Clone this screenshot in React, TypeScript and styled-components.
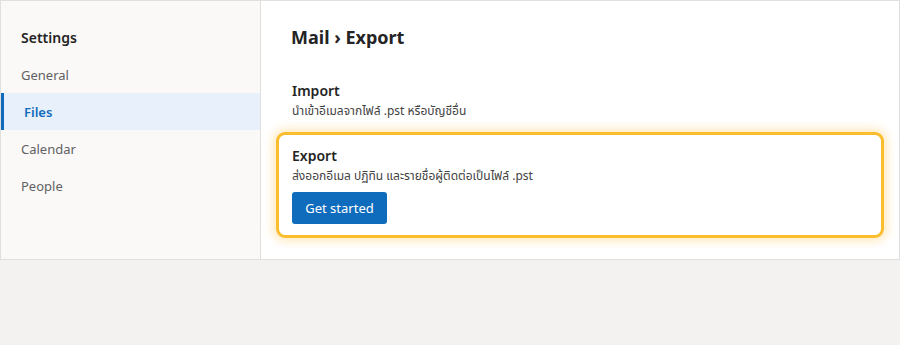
import styled, { createGlobalStyle } from "styled-components";

const GlobalStyle = createGlobalStyle`
  body {
    margin: 0;
    background: #f3f2f1;
    font-family: "Segoe UI", "Noto Sans", "Noto Sans Thai", "Open Sans", sans-serif;
    color: #242424;
  }
`;

const Frame = styled.div`
  display: flex;
  width: 900px;
  height: 260px;
  box-sizing: border-box;
  border: 1px solid #e1dfdd;
  background: #ffffff;
`;

const Sidebar = styled.nav`
  width: 259px;
  flex-shrink: 0;
  background: #faf9f8;
  border-right: 1px solid #e1dfdd;
  padding-top: 24px;
`;

const SidebarTitle = styled.h2`
  margin: 0 0 5px;
  padding-left: 20px;
  font-size: 14px;
  font-weight: 600;
  line-height: 26px;
  color: #242424;
`;

const NavItem = styled.div<{ $active?: boolean }>`
  height: 37px;
  display: flex;
  align-items: center;
  box-sizing: border-box;
  font-size: 13px;
  font-weight: ${(p) => (p.$active ? 600 : 400)};
  color: ${(p) => (p.$active ? "#0f6cbd" : "#616161")};
  background: ${(p) => (p.$active ? "#e8f0fb" : "transparent")};
  border-left: ${(p) => (p.$active ? "3px solid #0f6cbd" : "none")};
  margin-left: ${(p) => (p.$active ? "0" : "3px")};
  padding-left: ${(p) => (p.$active ? "20px" : "17px")};
`;

const Main = styled.main`
  flex: 1;
  padding: 22px 15px 0 15px;
`;

const Heading = styled.h1`
  margin: 0 0 29px 15px;
  font-size: 18px;
  font-weight: 700;
  line-height: 28px;
  color: #242424;
`;

const Section = styled.section<{ $highlight?: boolean }>`
  padding: ${(p) => (p.$highlight ? "10px 13px 11px 13px" : "0 16px")};
  margin-bottom: ${(p) => (p.$highlight ? "0" : "11px")};
  border: ${(p) => (p.$highlight ? "3px solid #fbbd2d" : "none")};
  border-radius: 9px;
  box-shadow: ${(p) => (p.$highlight ? "0 0 10px 3px rgba(255, 190, 60, 0.35)" : "none")};
`;

const SectionTitle = styled.h3`
  margin: 0;
  font-size: 14px;
  font-weight: 600;
  line-height: 21px;
  color: #242424;
`;

const SectionText = styled.p`
  margin: 0;
  font-size: 12px;
  line-height: 20px;
  color: #424242;
`;

const PrimaryButton = styled.button`
  margin-top: 6px;
  width: 95px;
  height: 32px;
  border: none;
  border-radius: 3px;
  background: #0f6cbd;
  color: #ffffff;
  font-family: inherit;
  font-size: 13px;
  cursor: pointer;
`;

export default function App() {
  return (
    <>
      <GlobalStyle />
      <Frame>
        <Sidebar>
          <SidebarTitle>Settings</SidebarTitle>
          <NavItem>General</NavItem>
          <NavItem $active>Files</NavItem>
          <NavItem>Calendar</NavItem>
          <NavItem>People</NavItem>
        </Sidebar>
        <Main>
          <Heading>Mail › Export</Heading>
          <Section>
            <SectionTitle>Import</SectionTitle>
            <SectionText>นำเข้าอีเมลจากไฟล์ .pst หรือบัญชีอื่น</SectionText>
          </Section>
          <Section $highlight>
            <SectionTitle>Export</SectionTitle>
            <SectionText>ส่งออกอีเมล ปฏิทิน และรายชื่อผู้ติดต่อเป็นไฟล์ .pst</SectionText>
            <PrimaryButton>Get started</PrimaryButton>
          </Section>
        </Main>
      </Frame>
    </>
  );
}
